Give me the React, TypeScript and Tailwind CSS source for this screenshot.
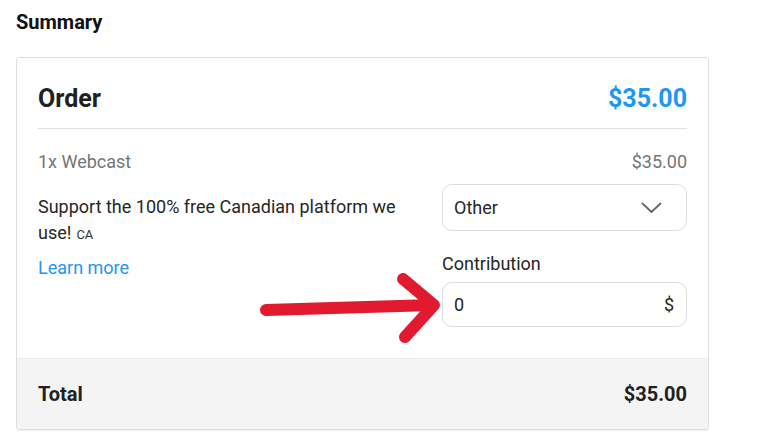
// Order summary card with contribution field
export default function App() {
  return (
    <div
      className="relative w-[757px] h-[447px] bg-white text-[#212121]"
      style={{ fontFamily: "Roboto, 'Noto Sans', Arial, sans-serif" }}
    >
      <div className="pl-4 pt-[8px]">
        <h2 className="text-[20px] leading-[28px] font-bold text-[#111]">Summary</h2>
      </div>

      <div className="ml-4 mt-[21px] w-[693px] border border-[#dedede] rounded-[3px] overflow-hidden shadow-[0_1px_1px_rgba(0,0,0,0.06)]">
        <div className="px-[21px]">
          <div className="flex items-center justify-between pt-[25px] pb-[13px] border-b border-[#e0e0e0]">
            <span className="text-[25px] leading-8 font-bold">Order</span>
            <span className="text-[25px] leading-8 font-bold text-[#2196f3]">$35.00</span>
          </div>

          <div className="flex items-center justify-between mt-[21px] text-[18px] leading-6 text-[#757575]">
            <span>1x Webcast</span>
            <span>$35.00</span>
          </div>

          <div className="flex gap-5 mt-[10px] pb-[31px]">
            <div className="flex-1 pt-[10px] text-[18px] text-[#262626]">
              <p className="leading-[26px]">Support the 100% free Canadian platform we</p>
              <div className="flex items-baseline gap-[5px] leading-[26px]">
                <span>use!</span>
                <span className="text-[13px] text-[#333]">CA</span>
              </div>
              <a className="block mt-[8px] leading-6 text-[#2196f3]">Learn more</a>
            </div>

            <div className="w-[245px] text-[18px] text-[#262626]">
              <div className="h-[47px] flex items-center justify-between pl-[11px] pr-[24px] border border-[#dcdcdc] rounded-[10px]">
                <span>Other</span>
                <svg width="21" height="12" viewBox="0 0 21 12" fill="none">
                  <path d="M1.5 1.5 L10.5 10 L19.5 1.5" stroke="#666" strokeWidth="1.8" strokeLinecap="round" strokeLinejoin="round" />
                </svg>
              </div>
              <label className="block mt-[21px] leading-6">Contribution</label>
              <div className="mt-[6px] h-[45px] flex items-center justify-between pl-[11px] pr-[12px] border border-[#dcdcdc] rounded-[10px]">
                <span>0</span>
                <span>$</span>
              </div>
            </div>
          </div>
        </div>

        <div className="h-[71px] flex items-center justify-between px-[21px] bg-[#f4f4f4] border-t border-[#ececec]">
          <span className="text-[20px] font-bold">Total</span>
          <span className="text-[20px] font-bold">$35.00</span>
        </div>
      </div>

      {/* annotation arrow drawn over the card */}
      <svg className="absolute left-0 top-0 pointer-events-none" width="757" height="447" viewBox="0 0 757 447">
        <g stroke="#e21a2f" strokeWidth="12" strokeLinecap="round" strokeLinejoin="round" fill="none">
          <path d="M266 310 L433 305" />
          <path d="M403 279 L434 305 L405 337" />
        </g>
      </svg>
    </div>
  );
}
